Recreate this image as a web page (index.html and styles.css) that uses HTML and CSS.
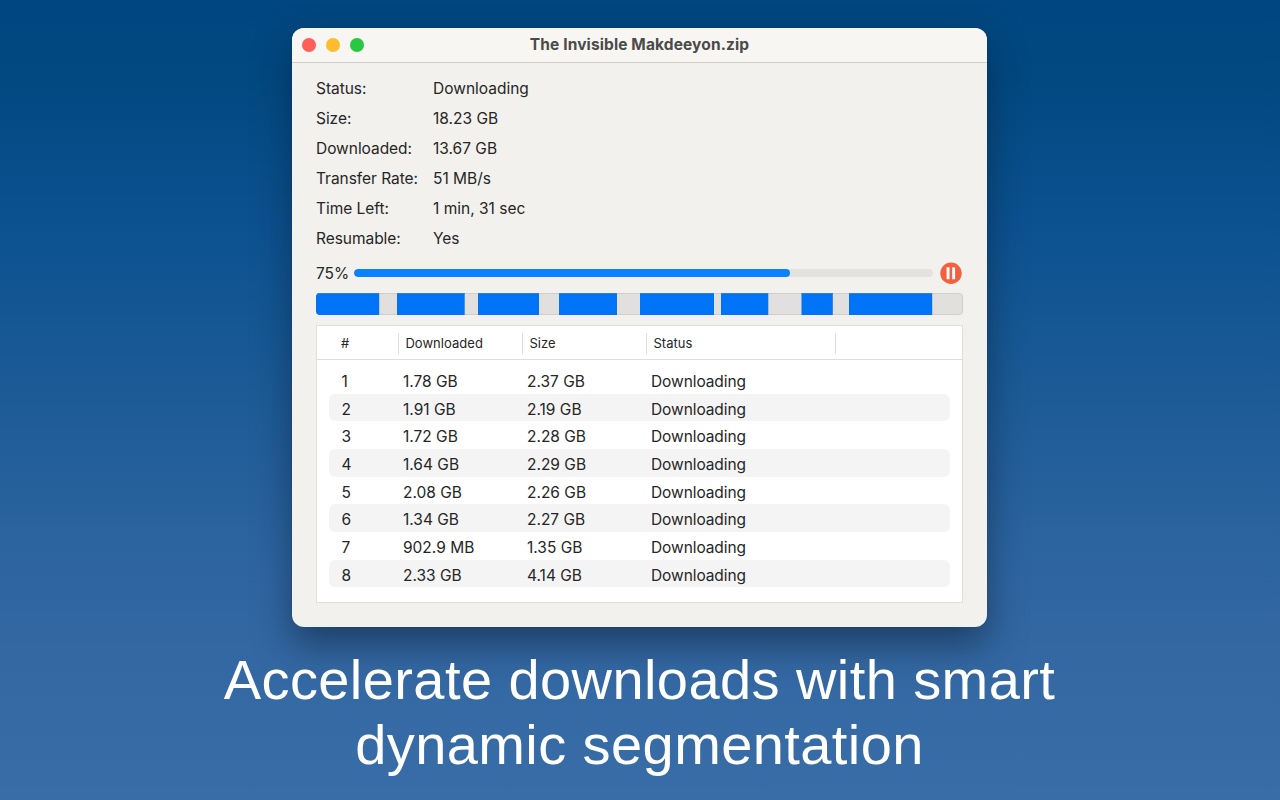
FILE: index.html
```html
<!DOCTYPE html>
<html lang="en">
<head>
<meta charset="utf-8">
<title>The Invisible Makdeeyon.zip</title>
<link rel="stylesheet" href="styles.css">
</head>
<body>
<main class="window">
  <header class="titlebar">
    <div class="lights"><span class="light close"></span><span class="light minimize"></span><span class="light expand"></span></div>
    <h1 class="title">The Invisible Makdeeyon.zip</h1>
  </header>
  <dl class="info">
    <dt>Status:</dt><dd>Downloading</dd>
    <dt>Size:</dt><dd>18.23 GB</dd>
    <dt>Downloaded:</dt><dd>13.67 GB</dd>
    <dt>Transfer Rate:</dt><dd>51 MB/s</dd>
    <dt>Time Left:</dt><dd>1 min, 31 sec</dd>
    <dt>Resumable:</dt><dd>Yes</dd>
  </dl>
  <div class="progress">
    <span class="percent">75%</span>
    <div class="track"><div class="fill"></div></div>
    <svg class="pause" viewBox="0 0 22 22" width="22" height="22"><circle cx="11" cy="11.300" r="10.700" fill="#f55f3e"/><path d="M6.600 5.300h2.900v12H6.600zM12.200 5.300H15.100v12h-2.900z" fill="#fff"/></svg>
  </div>
  <svg class="segments" viewBox="0 0 647 22" width="647" height="22">
    <defs><clipPath id="bar"><rect width="647" height="22" rx="4"/></clipPath></defs>
    <g clip-path="url(#bar)">
      <rect width="647" height="22" fill="#e1e0df"/>
      <rect x=".5" y=".5" width="646" height="21" rx="3.5" fill="none" stroke="#cfcecd"/>
      <path fill="#0074f6" d="M0 0h63.200v22H0zM81 0h67.700v22H81zM162 0h61v22h-61zM243 0h58v22h-58zM324 0h74v22h-74zM405 0h47.300v22H405zM485.500 0h31.300v22h-31.300zM533 0h83.200v22H533z"/>
      <path d="M0 .5h63M81 .5h67.500M162 .5h61M243 .5h58M324 .5h74M405 .5h47M485.500 .5h31M533 .5h83" stroke="#2b80db"/>
    </g>
  </svg>
  <section class="table">
    <div class="head"><span>#</span><span>Downloaded</span><span>Size</span><span>Status</span><span></span></div>
    <div class="rows">
      <div class="row"><span>1</span><span>1.78 GB</span><span>2.37 GB</span><span>Downloading</span></div>
      <div class="row"><span>2</span><span>1.91 GB</span><span>2.19 GB</span><span>Downloading</span></div>
      <div class="row"><span>3</span><span>1.72 GB</span><span>2.28 GB</span><span>Downloading</span></div>
      <div class="row"><span>4</span><span>1.64 GB</span><span>2.29 GB</span><span>Downloading</span></div>
      <div class="row"><span>5</span><span>2.08 GB</span><span>2.26 GB</span><span>Downloading</span></div>
      <div class="row"><span>6</span><span>1.34 GB</span><span>2.27 GB</span><span>Downloading</span></div>
      <div class="row"><span>7</span><span>902.9 MB</span><span>1.35 GB</span><span>Downloading</span></div>
      <div class="row"><span>8</span><span>2.33 GB</span><span>4.14 GB</span><span>Downloading</span></div>
    </div>
  </section>
</main>
<p class="caption">Accelerate downloads with smart<br>dynamic segmentation</p>
</body>
</html>
```
FILE: styles.css
```css
* { box-sizing: border-box; }
body {
  margin: 0;
  height: 800px;
  overflow: hidden;
  padding: 28px 1px 0 0;
  display: flex;
  flex-direction: column;
  align-items: center;
  background: linear-gradient(#004680 0, #024982 80px, #0b5190 220px, #1d5b97 400px, #2d65a0 560px, #3468a3 660px, #386da8 800px);
  font: 15.5px/30px Inter, sans-serif;
  color: #262626;
}
.window {
  width: 695px;
  height: 599px;
  flex: none;
  border-radius: 12px;
  overflow: hidden;
  background: #f2f1ed;
  box-shadow: 0 0 1px rgba(0,0,0,.4), 0 18px 36px rgba(10,25,45,.5);
}
.titlebar {
  height: 35px;
  display: grid;
  grid-template-columns: 1fr auto 1fr;
  align-items: center;
  padding: 0 9.5px;
  background: #f7f6f3;
  border-bottom: 1px solid #cfcecb;
}
.lights { display: flex; gap: 9.5px; }
.light { width: 14.5px; height: 14.5px; border-radius: 50%; }
.close { background: #ff5f57; }
.minimize { background: #febc2e; }
.expand { background: #28c840; }
.title { margin: 0; font-size: 15.5px; line-height: 32px; font-weight: 700; color: #4b4a48; letter-spacing: .12px; padding-bottom: 1px; }
.info {
  margin: 11px 24px 0;
  display: grid;
  grid-template-columns: 117px 1fr;
  grid-auto-rows: 30.1px;
}
.info dt { letter-spacing: -.04px; }
.info dd { margin: 0; }
.progress { height: 22px; margin: 7.4px 25px 0 24px; display: flex; align-items: center; }
.percent { width: 38px; padding-top: 3px; }
.track { width: 579px; height: 8px; border-radius: 4px; background: #e3e2df; overflow: hidden; }
.fill { width: 436px; height: 8px; border-radius: 4px; background: #0a82ff; }
.pause { margin-left: 7px; flex: none; }
.segments { display: block; margin: 9px 24px 0; }
.table { width: 647px; height: 278px; margin: 10px 24px 0; background: #fff; border: 1px solid #e0dfdd; }
.head {
  height: 34px;
  padding: 7px 0 6px;
  display: grid;
  grid-template-columns: 81px 124px 124px 189px 1fr;
  border-bottom: 1px solid #dedede;
  font-size: 13px;
  line-height: 21px;
  letter-spacing: .04px;
}
.head span { padding-left: 6.4px; border-left: 1px solid #dcdcdc; }
.head span:first-child { padding-left: 24px; border: 0; }
.rows { padding: 6px 12px; }
.row {
  height: 27.7px;
  line-height: 31px;
  padding-left: 12.4px;
  border-radius: 6px;
  display: grid;
  grid-template-columns: 61.6px 124px 124px 1fr;
}
.row span:last-child { letter-spacing: -.08px; }
.row:nth-child(even) { background: #f4f4f4; }
.caption {
  margin: 20px 0 0;
  text-align: center;
  white-space: nowrap;
  font: 56px/65px "Liberation Sans", Arial, sans-serif;
  letter-spacing: .42px;
  color: #fff;
}
```
